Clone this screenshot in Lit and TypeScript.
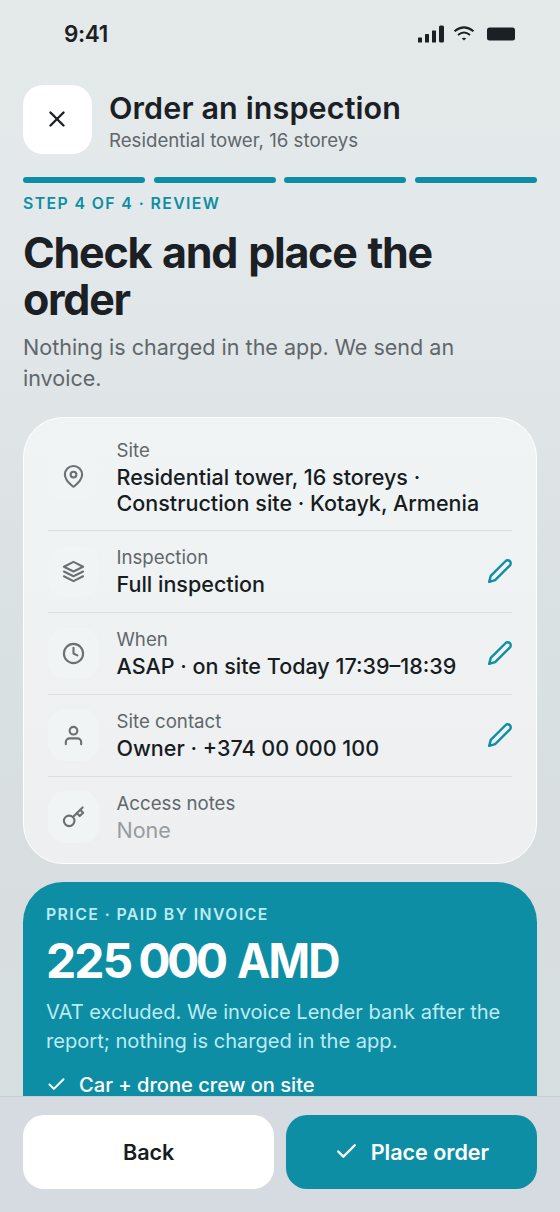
import { LitElement, html, css, svg, nothing } from "lit";
import { customElement, property } from "lit/decorators.js";

const ICONS: Record<string, unknown> = {
  close: svg`<path d="M18 6 6 18"/><path d="m6 6 12 12"/>`,
  pin: svg`<path d="M21 10c0 5.200-6 10.500-8.100 12.200a1.400 1.400 0 0 1-1.800 0C9 20.500 3 15.200 3 10a9 9 0 0 1 18 0"/><circle cx="12" cy="10" r="3"/>`,
  layers: svg`<path d="m12 2 10 5-10 5L2 7Z"/><path d="m2 12 10 5 10-5"/><path d="m2 17 10 5 10-5"/>`,
  clock: svg`<circle cx="12" cy="12" r="10"/><path d="M12 6v6l4 2"/>`,
  user: svg`<path d="M20 21v-2a4 4 0 0 0-4-4H8a4 4 0 0 0-4 4v2"/><circle cx="12" cy="7" r="4"/>`,
  key: svg`<circle cx="7.500" cy="15.500" r="5.500"/><path d="m11.400 11.600 10.100-10.100"/><path d="m15.500 7.500 3 3L22 7l-3-3"/>`,
  pencil: svg`<path d="M17 3a2.830 2.830 0 1 1 4 4L7.500 20.500 2 22l1.500-5.500Z"/>`,
  check: svg`<path d="M20 6 9 17l-5-5"/>`,
};

@customElement("ui-icon")
class UiIcon extends LitElement {
  @property() name = "";
  @property() weight = "2";
  static styles = css`
    :host { display: block; flex: none; width: 23px; height: 23px; }
    svg { display: block; width: 100%; height: 100%; fill: none; stroke: currentColor; stroke-linecap: round; stroke-linejoin: round; overflow: visible; }
  `;
  render() {
    return html`<svg viewBox="0 0 24 24" stroke-width=${this.weight}>${ICONS[this.name]}</svg>`;
  }
}

@customElement("status-bar")
class StatusBar extends LitElement {
  static styles = css`
    :host { display: flex; justify-content: space-between; align-items: center; height: 67px; padding: 0 45px 0 64px; box-sizing: border-box; color: #1b2024; }
    .time { font-size: 22.500px; font-weight: 600; line-height: 28px; letter-spacing: -0.400px; }
    .signals { display: block; width: 98px; height: 18px; }
  `;
  render() {
    return html`
      <span class="time">9:41</span>
      <svg class="signals" viewBox="0 0 98 18" fill="currentColor">
        <rect x="1" y="12.500" width="4" height="5" rx="0.500"/>
        <rect x="8" y="9" width="4" height="8.500" rx="0.500"/>
        <rect x="15" y="5.500" width="4" height="12" rx="0.500"/>
        <rect x="22" y="0.500" width="5" height="17" rx="1.500"/>
        <g fill="none" stroke="currentColor" stroke-width="2">
          <path d="M37.500 6.200Q47 -1.500 56.500 6.200"/>
          <path d="M41 10Q47 5 53 10"/>
        </g>
        <path d="M44.700 13.300Q47 12 49.300 13.300L47 15.600Z"/>
        <rect x="70" y="2.500" width="28" height="13" rx="2.500"/>
      </svg>`;
  }
}

@customElement("summary-row")
class SummaryRow extends LitElement {
  @property() icon = "";
  @property() label = "";
  @property({ attribute: false }) value: unknown = "";
  @property({ type: Boolean }) editable = false;
  @property({ type: Boolean }) muted = false;
  static styles = css`
    :host { display: flex; align-items: center; gap: 17.400px; padding: 13.500px 0 14.400px; border-bottom: 1.400px solid #dadfe1; }
    :host(:last-of-type) { border-bottom: 0; }
    .tile { display: grid; place-items: center; flex: none; width: 51.500px; height: 51.500px; border-radius: 17px; background: #f1f4f5; color: #6a7073; }
    .copy { flex: 1; min-width: 0; }
    :host(:not(:first-of-type)) .copy { margin: -1px 0 1px; }
    .label { font-size: 18.660px; line-height: 27px; color: #5f676b; }
    .value { font-size: 21.540px; line-height: 26px; font-weight: 500; color: #171c1f; white-space: nowrap; }
    .muted { color: #969c9f; font-weight: 400; }
    .edit { width: 26px; height: 26px; margin-right: -1px; color: #0d8ea4; }
  `;
  render() {
    return html`
      <div class="tile"><ui-icon name=${this.icon} weight="2.200"></ui-icon></div>
      <div class="copy">
        <div class="label">${this.label}</div>
        <div class="value ${this.muted ? "muted" : ""}">${this.value}</div>
      </div>
      ${this.editable ? html`<ui-icon class="edit" name="pencil" weight="2.200"></ui-icon>` : nothing}`;
  }
}

@customElement("app-root")
class AppRoot extends LitElement {
  static styles = css`
    :host { display: flex; flex-direction: column; width: 100%; height: 1212px; overflow: hidden; box-sizing: border-box; font-family: Inter, "Liberation Sans", sans-serif; color: #1b2024;
      background: linear-gradient(180deg, #e4e9ea 0%, #e3e8ea 20%, #dfe4e6 35%, #dae1e3 52%, #d8dee0 75%, #d7dfdf 100%); }
    .head { display: flex; align-items: center; gap: 17px; padding: 17px 23px 0; height: 70px; }
    .close { display: grid; place-items: center; width: 69px; height: 69px; border-radius: 20px; background: #fff; }
    .close ui-icon { width: 26px; height: 26px; margin-right: 1px; }
    .titles { padding-top: 5px; }
    .title { font-size: 30.500px; line-height: 38px; font-weight: 600; letter-spacing: 0.120px; }
    .sub { font-size: 18.660px; line-height: 28px; color: #5f676b; }
    .steps { display: grid; grid-template-columns: repeat(4, 1fr); gap: 8.600px; padding: 22.500px 23px 0; }
    .step { height: 6px; border-radius: 3px; background: #0d8ea4; }
    .body { flex: 1; min-height: 0; overflow: hidden; padding: 10px 23px 0; }
    .eyebrow { font-size: 15.800px; line-height: 22px; font-weight: 600; letter-spacing: 1.400px; color: #0d8ea4; }
    .headline { margin: 14px 0 0; font-size: 43px; line-height: 47px; font-weight: 700; letter-spacing: -1.250px; word-spacing: 2px; }
    .lead { margin: 9px 0 0; font-size: 21.540px; line-height: 31px; color: #5f676b; }
    .summary { margin-top: 23px; padding: 6px 23.600px 5px; border: 1.400px solid #fff; border-radius: 40px; background: linear-gradient(180deg, #f1f4f5, #edeff1); }
    .price { margin-top: 18px; padding: 21px 23px; height: 300px; border-radius: 40px; background: #0d8ea5; color: #fff; }
    .price-label { font-size: 15.800px; line-height: 24px; font-weight: 600; letter-spacing: 1.430px; color: #bfeaf2; }
    .amount { display: flex; margin-top: 6px; font-size: 48px; line-height: 56px; font-weight: 700; letter-spacing: -2px; }
    .thousands { margin-right: 7px; }
    .units { margin-right: 13px; letter-spacing: -3.600px; }
    .currency { transform: scaleX(0.930); transform-origin: left; }
    .terms { margin-top: 9px; font-size: 20.100px; line-height: 29px; color: #bfeaf2; }
    .perk { display: flex; align-items: center; gap: 12px; margin-top: 15px; font-size: 20.100px; line-height: 28px; font-weight: 500; }
    .perk ui-icon { width: 21px; height: 21px; }
    .actions { display: grid; grid-template-columns: 1fr 1fr; gap: 11.500px; padding: 17.500px 23px 23px; border-top: 1px solid #cbd0d5; background: #d6dbe1; }
    .btn { display: flex; align-items: center; justify-content: center; gap: 12px; height: 74.500px; border-radius: 21px; font-size: 21.540px; font-weight: 600; background: #fff; color: #171c1f; }
    .primary { background: #0d8ea5; color: #fff; }
    .primary ui-icon { width: 25px; height: 25px; }
  `;
  render() {
    return html`
      <status-bar></status-bar>
      <header class="head">
        <div class="close"><ui-icon name="close" weight="2.200"></ui-icon></div>
        <div class="titles">
          <div class="title">Order an inspection</div>
          <div class="sub">Residential tower, 16 storeys</div>
        </div>
      </header>
      <div class="steps">${[1, 2, 3, 4].map(() => html`<div class="step"></div>`)}</div>
      <main class="body">
        <div class="eyebrow">STEP 4 OF 4 · REVIEW</div>
        <h1 class="headline">Check and place the<br>order</h1>
        <p class="lead">Nothing is charged in the app. We send an<br>invoice.</p>
        <section class="summary">
          <summary-row icon="pin" label="Site" .value=${html`Residential tower, 16 storeys ·<br>Construction site · Kotayk, Armenia`}></summary-row>
          <summary-row icon="layers" label="Inspection" .value=${"Full inspection"} editable></summary-row>
          <summary-row icon="clock" label="When" .value=${"ASAP · on site Today 17:39–18:39"} editable></summary-row>
          <summary-row icon="user" label="Site contact" .value=${"Owner · +374 00 000 100"} editable></summary-row>
          <summary-row icon="key" label="Access notes" .value=${"None"} muted></summary-row>
        </section>
        <section class="price">
          <div class="price-label">PRICE · PAID BY INVOICE</div>
          <div class="amount"><span class="thousands">225</span><span class="units">000</span><span class="currency">AMD</span></div>
          <div class="terms">VAT excluded. We invoice Lender bank after the<br>report; nothing is charged in the app.</div>
          <div class="perk"><ui-icon name="check" weight="2.300"></ui-icon>Car + drone crew on site</div>
        </section>
      </main>
      <footer class="actions">
        <div class="btn">Back</div>
        <div class="btn primary"><ui-icon name="check" weight="2.300"></ui-icon>Place order</div>
      </footer>`;
  }
}
